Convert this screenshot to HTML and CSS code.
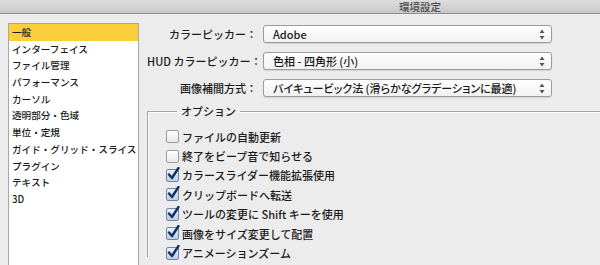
FILE: index.html
```html
<!DOCTYPE html>
<html lang="ja">
<head>
  <meta charset="utf-8" />
  <title>環境設定</title>
  <link rel="stylesheet" href="styles.css">
</head>
<body>
  <div class="titlebar"><span>環境設定</span></div>

  <div class="window">
    <ul class="sidebar">
      <li class="selected">一般</li>
      <li>インターフェイス</li>
      <li>ファイル管理</li>
      <li>パフォーマンス</li>
      <li>カーソル</li>
      <li>透明部分・色域</li>
      <li>単位・定規</li>
      <li>ガイド・グリッド・スライス</li>
      <li>プラグイン</li>
      <li>テキスト</li>
      <li>3D</li>
    </ul>

    <div class="panel">
      <div class="form">
        <span class="label">カラーピッカー：</span>
        <div class="select"><span>Adobe</span><svg class="arrows" viewBox="0 0 6 11" width="6" height="11"><path d="M3 0.5 L5.5 4 L0.5 4 Z M3 10.5 L5.5 7 L0.5 7 Z" /></svg></div>

        <span class="label">HUD カラーピッカー：</span>
        <div class="select"><span>色相 - 四角形 (小)</span><svg class="arrows" viewBox="0 0 6 11" width="6" height="11"><path d="M3 0.5 L5.5 4 L0.5 4 Z M3 10.5 L5.5 7 L0.5 7 Z" /></svg></div>

        <span class="label">画像補間方式：</span>
        <div class="select"><span>バイキュービック法 (滑らかなグラデーションに最適)</span><svg class="arrows" viewBox="0 0 6 11" width="6" height="11"><path d="M3 0.5 L5.5 4 L0.5 4 Z M3 10.5 L5.5 7 L0.5 7 Z" /></svg></div>
      </div>

      <fieldset class="options">
        <legend>オプション</legend>
        <div class="check"><span class="box"></span>ファイルの自動更新</div>
        <div class="check"><span class="box"></span>終了をビープ音で知らせる</div>
        <div class="check on"><span class="box"><svg viewBox="0 0 14 14" width="14" height="14"><path d="M3 7.5 L6 11 L12.5 1" /></svg></span>カラースライダー機能拡張使用</div>
        <div class="check on"><span class="box"><svg viewBox="0 0 14 14" width="14" height="14"><path d="M3 7.5 L6 11 L12.5 1" /></svg></span>クリップボードへ転送</div>
        <div class="check on"><span class="box"><svg viewBox="0 0 14 14" width="14" height="14"><path d="M3 7.5 L6 11 L12.5 1" /></svg></span>ツールの変更に Shift キーを使用</div>
        <div class="check on"><span class="box"><svg viewBox="0 0 14 14" width="14" height="14"><path d="M3 7.5 L6 11 L12.5 1" /></svg></span>画像をサイズ変更して配置</div>
        <div class="check on"><span class="box"><svg viewBox="0 0 14 14" width="14" height="14"><path d="M3 7.5 L6 11 L12.5 1" /></svg></span>アニメーションズーム</div>
      </fieldset>
    </div>
  </div>
</body>
</html>
```

FILE: styles.css
```css
html, body {
  margin: 0;
  padding: 0;
}
body {
  width: 600px;
  height: 265px;
  overflow: hidden;
  background-color: #ececec;
  color: #1a1a1a;
  font-family: "Noto Sans CJK JP", "Noto Sans", sans-serif;
  font-size: 11px;
  font-weight: 500;
}
.titlebar {
  height: 13px;
  border-bottom: 1px solid #8e8e8e;
  background: linear-gradient(#dcdcdc, #c9c9c9);
  display: flex;
  justify-content: center;
  padding-left: 240px;
  color: #4a4a4a;
  font-size: 10.5px;
  line-height: 13px;
  overflow: hidden;
}
.window {
  display: flex;
  align-items: flex-start;
  height: 251px;
  overflow: hidden;
}
.sidebar {
  list-style: none;
  margin: 9px 0 0 8px;
  padding: 0;
  width: 129px;
  height: 241px;
  background-color: #fff;
  border: 1px solid #a7a7a7;
  border-bottom: none;
  font-size: 9.6px;
}
.sidebar li {
  height: 16.7px;
  line-height: 16.7px;
  padding-left: 3px;
  white-space: nowrap;
}
.sidebar li.selected {
  background-color: #fbcf3c;
}
.panel {
  margin-left: 8px;
  padding-top: 11px;
  flex: 1;
}
.form {
  display: grid;
  grid-template-columns: 110px 289px;
  column-gap: 6px;
  row-gap: 9px;
  align-items: center;
}
.label {
  text-align: right;
  white-space: nowrap;
}
.select {
  display: flex;
  align-items: center;
  justify-content: space-between;
  height: 16px;
  line-height: 16px;
  border: 1px solid #9c9c9c;
  border-radius: 3px;
  background: linear-gradient(#ffffff, #f1f1f1);
  box-shadow: 0 1px 1px rgba(0, 0, 0, 0.12);
  padding: 0 6px 0 9px;
  white-space: nowrap;
  font-feature-settings: "palt";
}
.arrows path {
  fill: #555;
}
.options {
  margin: 6px -30px 0 0;
  padding: 8px 0 0 18px;
  border: none;
  border-top: 1px solid #a5a5a5;
  border-left: 1px solid #a5a5a5;
  box-shadow: inset 1px 1px 0 #fafafa;
  height: 145px;
}
.options legend {
  margin-left: 11px;
  padding: 0 4px;
  font-size: 11px;
}
.check {
  display: flex;
  align-items: center;
  height: 19.4px;
  white-space: nowrap;
}
.box {
  position: relative;
  width: 11px;
  height: 11px;
  margin-right: 3px;
  border: 1px solid #9b9b9b;
  border-radius: 2px;
  background: linear-gradient(#ffffff, #e9e9e9);
}
.check.on .box {
  border-color: #6f86a8;
  background: linear-gradient(#eaf2fb, #b9cde6);
}
.box svg {
  position: absolute;
  left: -1px;
  top: -3px;
}
.box svg path {
  fill: none;
  stroke: #15305e;
  stroke-width: 2.4;
  stroke-linecap: round;
  stroke-linejoin: round;
}
```
